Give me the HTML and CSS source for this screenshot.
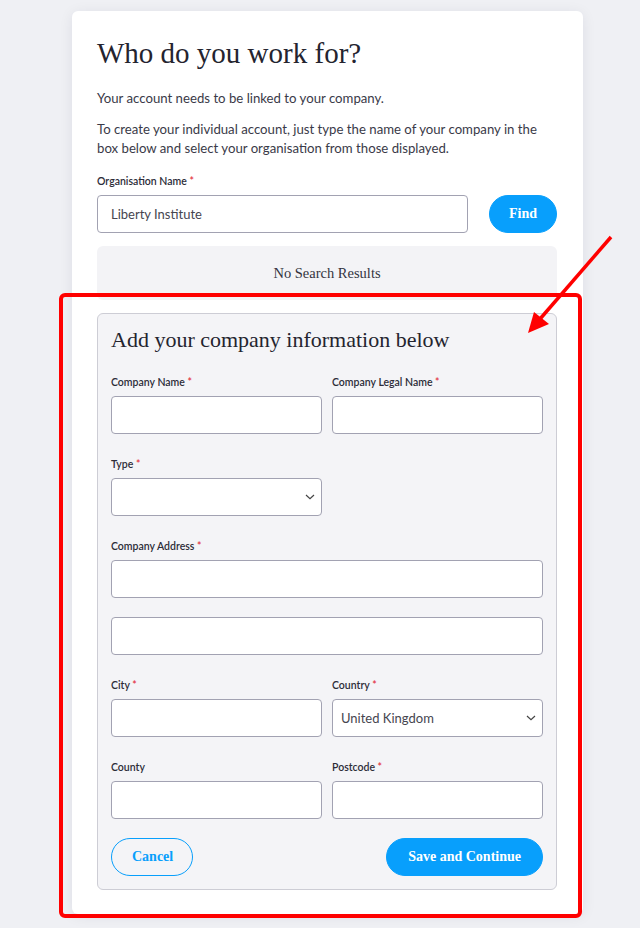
FILE: index.html
```html
<!DOCTYPE html>
<html lang="en">
<head>
<meta charset="utf-8">
<title>Who do you work for?</title>
<link rel="stylesheet" href="styles.css">
</head>
<body>
<div class="page">
  <div class="card">
    <h1 class="title">Who do you work for?</h1>
    <p class="lead">Your account needs to be linked to your company.</p>
    <p class="lead lead-2">To create your individual account, just type the name of your company in the box below and select your organisation from those displayed.</p>

    <label class="label org-label">Organisation Name <span class="req">*</span></label>
    <div class="search-row">
      <div class="input org-input">Liberty Institute</div>
      <button class="btn btn-primary btn-find">Find</button>
    </div>

    <div class="results">No Search Results</div>

    <div class="panel">
      <h2 class="panel-title">Add your company information below</h2>

      <div class="row">
        <div class="field">
          <label class="label">Company Name <span class="req">*</span></label>
          <div class="input"></div>
        </div>
        <div class="field">
          <label class="label">Company Legal Name <span class="req">*</span></label>
          <div class="input"></div>
        </div>
      </div>

      <div class="row">
        <div class="field">
          <label class="label">Type <span class="req">*</span></label>
          <div class="input select">
            <span class="select-value"></span>
            <svg class="chevron" width="10" height="6" viewBox="0 0 10 6"><path d="M1 1 L5 4.6 L9 1" fill="none" stroke="#444" stroke-width="1.2"/></svg>
          </div>
        </div>
        <div class="field"></div>
      </div>

      <div class="field field-wide">
        <label class="label">Company Address <span class="req">*</span></label>
        <div class="input"></div>
        <div class="input input-extra"></div>
      </div>

      <div class="row">
        <div class="field">
          <label class="label">City <span class="req">*</span></label>
          <div class="input"></div>
        </div>
        <div class="field">
          <label class="label">Country <span class="req">*</span></label>
          <div class="input select">
            <span class="select-value">United Kingdom</span>
            <svg class="chevron" width="10" height="6" viewBox="0 0 10 6"><path d="M1 1 L5 4.6 L9 1" fill="none" stroke="#444" stroke-width="1.2"/></svg>
          </div>
        </div>
      </div>

      <div class="row">
        <div class="field">
          <label class="label">County</label>
          <div class="input"></div>
        </div>
        <div class="field">
          <label class="label">Postcode <span class="req">*</span></label>
          <div class="input"></div>
        </div>
      </div>

      <div class="actions">
        <button class="btn btn-outline">Cancel</button>
        <button class="btn btn-primary">Save and Continue</button>
      </div>
    </div>
  </div>
</div>

<svg class="annotation" width="640" height="928" viewBox="0 0 640 928">
  <rect x="61" y="295" width="519" height="621" rx="4" ry="4" fill="none" stroke="#ff0000" stroke-width="4"/>
  <line x1="611" y1="237" x2="540" y2="319" stroke="#ff0000" stroke-width="3.5"/>
  <polygon points="528,333 534,312 549,324" fill="#ff0000"/>
</svg>
</body>
</html>
```

FILE: styles.css
```css
html, body {
  margin: 0;
  padding: 0;
}

body {
  background: #eff0f4;
  font-family: Lato, "Noto Sans", sans-serif;
  color: #3a3a48;
  width: 640px;
  height: 928px;
  overflow: hidden;
  position: relative;
}

.page {
  padding: 11px 0 0 72px;
}

.card {
  width: 511px;
  box-sizing: border-box;
  background: #ffffff;
  border-radius: 6px;
  padding: 25px 26px 24px 25px;
  box-shadow: 0 2px 14px rgba(30, 30, 60, 0.08);
}

.title {
  margin: 0;
  font-family: "Liberation Serif", serif;
  font-weight: normal;
  font-size: 29px;
  line-height: 35px;
  color: #24242f;
}

.lead {
  margin: 17px 0 0;
  font-size: 13.2px;
  line-height: 20px;
  color: #3a3a48;
}

.lead-2 {
  margin-top: 12px;
  line-height: 19px;
}

.label {
  display: block;
  font-size: 10.5px;
  line-height: 14px;
  font-weight: 600;
  color: #2c2c38;
  margin-bottom: 7px;
}

.org-label {
  margin-top: 16px;
}

.req {
  color: #e3303c;
}

.search-row {
  display: flex;
  gap: 21px;
}

.input {
  height: 38px;
  box-sizing: border-box;
  background: #ffffff;
  border: 1px solid #a2a2b2;
  border-radius: 4px;
  font-size: 13px;
  color: #45454f;
  display: flex;
  align-items: center;
}

.org-input {
  flex: 1;
  padding-left: 13px;
}

.btn {
  height: 38px;
  box-sizing: border-box;
  border-radius: 19px;
  font-family: "Liberation Serif", serif;
  font-weight: bold;
  font-size: 14px;
  border: 1px solid #089ffc;
  cursor: pointer;
}

.btn-primary {
  background: #089ffc;
  color: #ffffff;
  padding: 0 21px;
}

.btn-find {
  width: 68px;
  padding: 0;
}

.btn-outline {
  background: transparent;
  color: #089ffc;
  padding: 0 20px;
  width: 82px;
}

.results {
  margin-top: 13px;
  height: 54px;
  background: #f3f3f6;
  border-radius: 6px;
  display: flex;
  align-items: center;
  justify-content: center;
  font-family: "Liberation Serif", serif;
  font-size: 14.5px;
  color: #33333f;
}

.panel {
  margin-top: 13px;
  background: #f4f4f7;
  border: 1px solid #cdcdd5;
  border-radius: 6px;
  padding: 13px;
}

.panel-title {
  margin: 0 0 22px;
  font-family: "Liberation Serif", serif;
  font-weight: normal;
  font-size: 22px;
  line-height: 26px;
  color: #24242f;
}

.row {
  display: grid;
  grid-template-columns: 1fr 1fr;
  column-gap: 10px;
}

.field {
  margin-bottom: 23px;
}

.input-extra {
  margin-top: 19px;
}

.select {
  justify-content: space-between;
  padding: 0 6px 0 8px;
}

.select-value {
  font-size: 13px;
  color: #45454f;
}

.chevron {
  display: block;
}

.actions {
  display: flex;
  justify-content: space-between;
  margin-top: -4px;
}

.annotation {
  position: absolute;
  top: 0;
  left: 0;
  pointer-events: none;
}
```
